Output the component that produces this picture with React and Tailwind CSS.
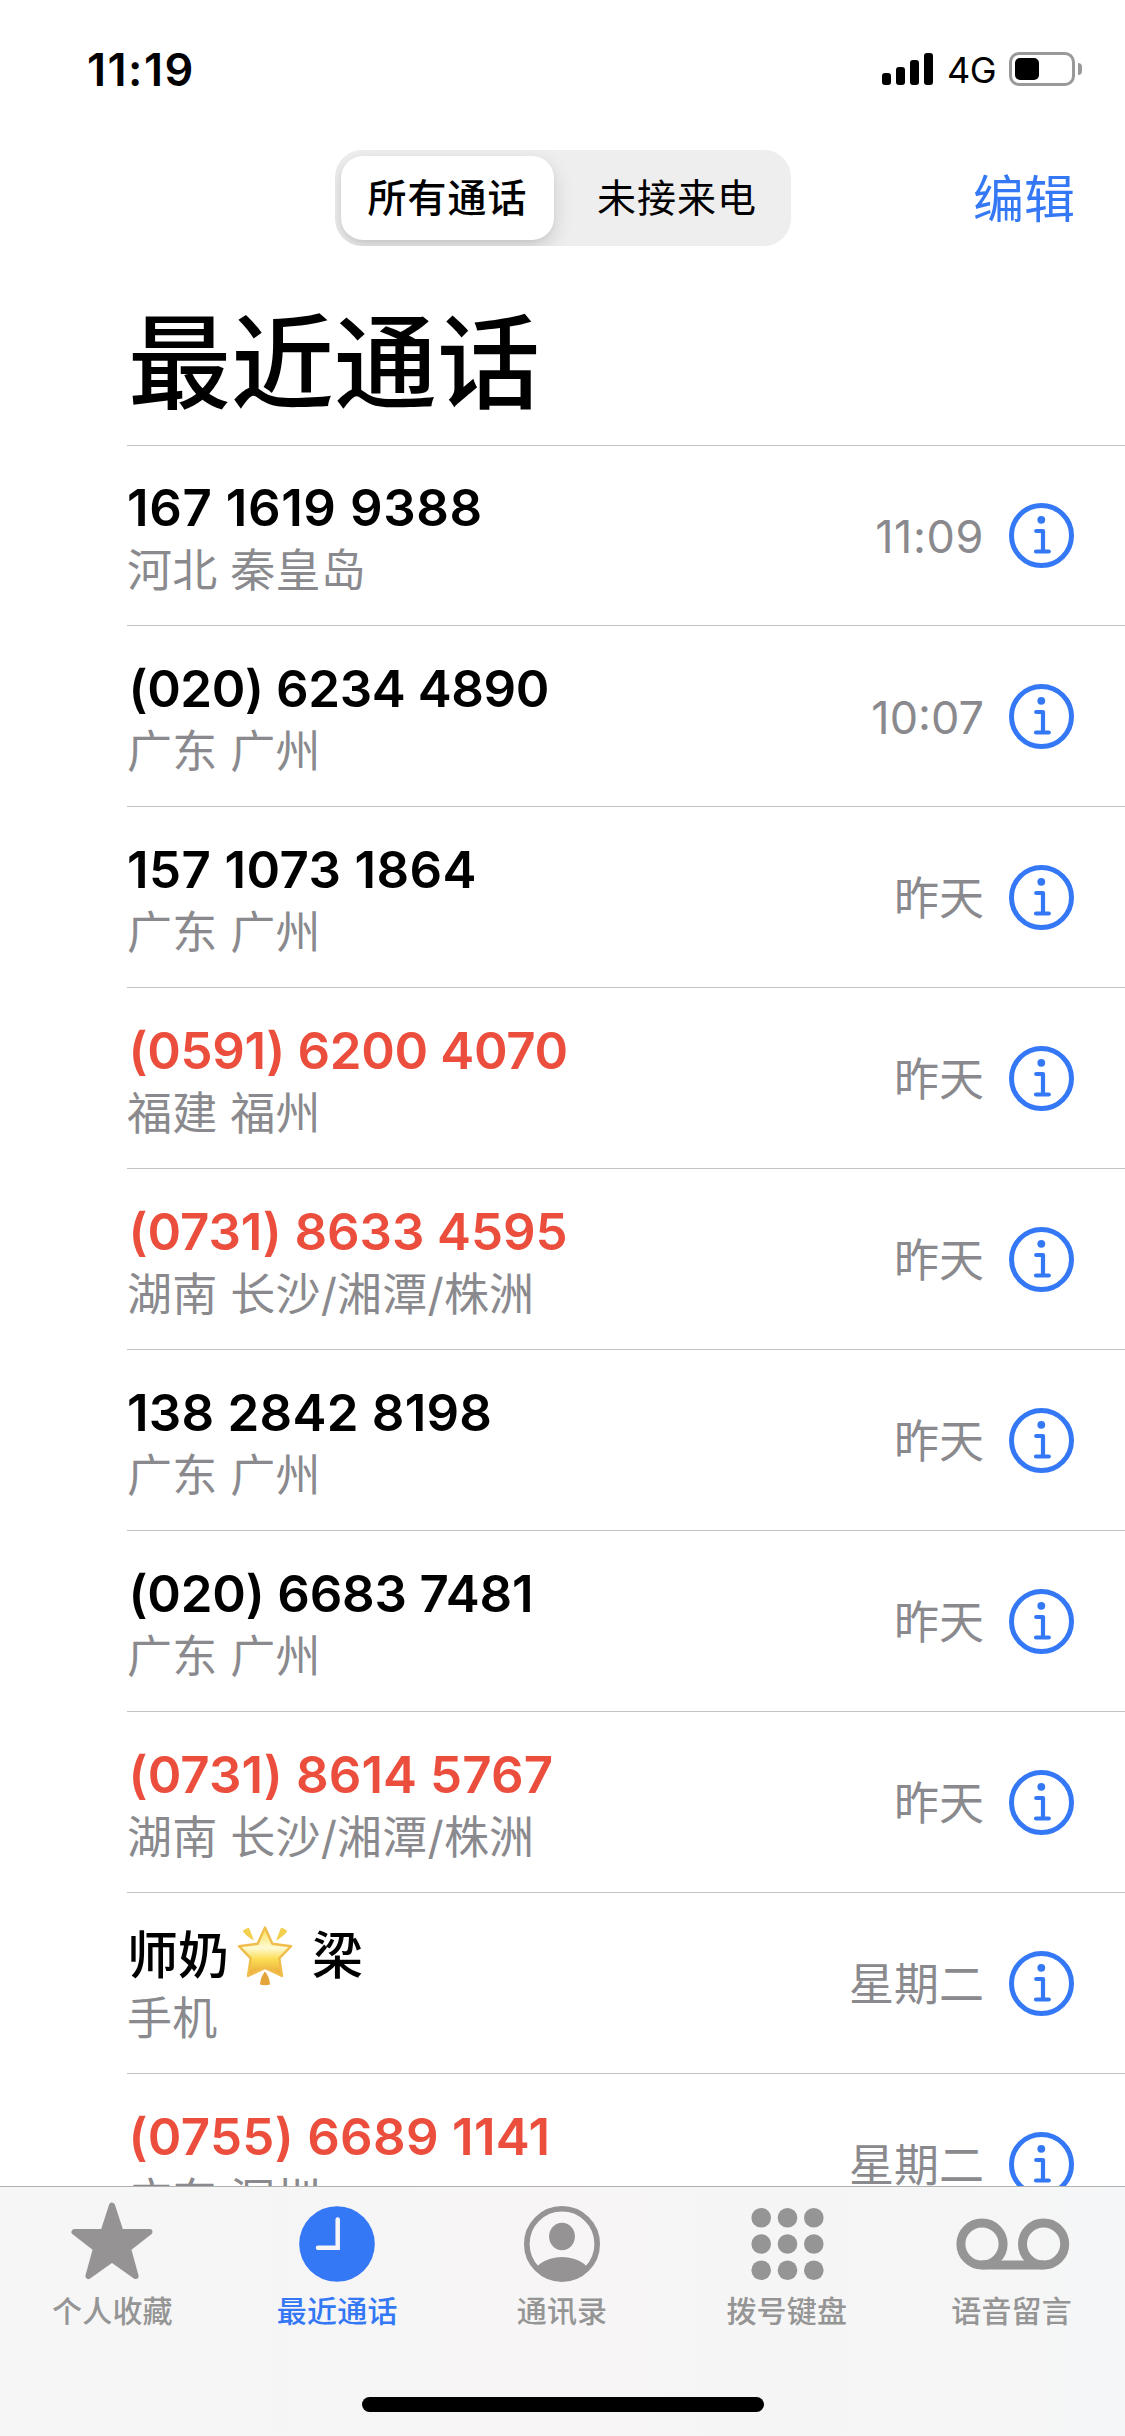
import { useState } from 'react';
import clsx from 'clsx';

const calls = [
  { id: 1, name: '167 1619 9388', place: '河北 秦皇岛', time: '11:09', tracking: 'tracking-[0.6px]' },
  { id: 2, name: '(020) 6234 4890', place: '广东 广州', time: '10:07', tracking: 'tracking-[-0.4px] pl-[1.5px]' },
  { id: 3, name: '157 1073 1864', place: '广东 广州', time: '昨天', tracking: 'tracking-[0.4px]' },
  { id: 4, name: '(0591) 6200 4070', place: '福建 福州', time: '昨天', missed: true, tracking: 'tracking-[-0.35px] pl-[1.5px]' },
  { id: 5, name: '(0731) 8633 4595', place: '湖南 长沙/湘潭/株洲', time: '昨天', missed: true, tracking: 'tracking-[-0.1px] pl-[1.5px]' },
  { id: 6, name: '138 2842 8198', place: '广东 广州', time: '昨天', tracking: 'tracking-[0.25px]' },
  { id: 7, name: '(020) 6683 7481', place: '广东 广州', time: '昨天', tracking: 'tracking-[-0.2px] pl-[1.5px]' },
  { id: 8, name: '(0731) 8614 5767', place: '湖南 长沙/湘潭/株洲', time: '昨天', missed: true, tracking: 'tracking-[0.1px] pl-[1.5px]' },
  { id: 9, name: '师奶', star: true, nameEnd: '梁', place: '手机', time: '星期二' },
  { id: 10, name: '(0755) 6689 1141', place: '广东 深圳', time: '星期二', missed: true, tracking: 'tracking-[0.3px] pl-[1.5px]' },
];

const InfoIcon = () => (
  <svg className="size-[65px]" viewBox="0 0 65 65" fill="none" stroke="#3478f6" strokeLinecap="round" strokeLinejoin="round">
    <circle cx="32.5" cy="32.5" r="30" strokeWidth="5" />
    <circle cx="32.3" cy="16.8" r="3.9" fill="#3478f6" stroke="none" />
    <path d="M27.2 28H34v20.5M27 48.5h12.8" strokeWidth="4.2" />
  </svg>
);

const GlowingStar = () => (
  <svg className="mr-[10px] ml-[8px] h-[60px] w-[56px] shrink-0" viewBox="0 0 56 60">
    <defs>
      <linearGradient id="glow" x1="0" y1="0" x2="0" y2="1">
        <stop offset="0" stopColor="#fbe04f" />
        <stop offset="0.42" stopColor="#fefad2" />
        <stop offset="0.65" stopColor="#fbde55" />
        <stop offset="1" stopColor="#e8a437" />
      </linearGradient>
    </defs>
    <path
      d="M28 1.5L35.3 17.8L54 20.2L42.3 32.4L45 50L28 42L11 50L13.7 32.4L2 20.2L20.7 17.8z"
      fill="url(#glow)"
      stroke="#f0bd4c"
      strokeWidth="2.4"
      strokeLinejoin="round"
    />
    <path d="M5.500 5Q9 2 12 1.800L17 14.500Q10 11 5.500 5z" fill="#f3cf4e" />
    <path d="M50.500 5Q47 2 44 1.800L39 14.500Q46 11 50.500 5z" fill="#f3cf4e" />
    <path d="M28 45.500Q32.500 51 33 58.500Q28 60 23 58.500Q23.500 51 28 45.500z" fill="#e4a43a" />
  </svg>
);

const StatusBar = () => (
  <div className="flex h-[132px] items-start justify-between pt-[52px] pr-[43px] pl-[87px]">
    <span className="text-[45px] leading-[35px] font-semibold tracking-[1.5px]">11:19</span>
    <div className="flex items-start">
      <div className="mt-px mr-[14px] flex h-[32px] items-end gap-[5px]">
        <span className="h-[12px] w-[9px] rounded-[3px] bg-black" />
        <span className="h-[18px] w-[9px] rounded-[3px] bg-black" />
        <span className="h-[25px] w-[9px] rounded-[3px] bg-black" />
        <span className="h-[32px] w-[9px] rounded-[3px] bg-black" />
      </div>
      <span className="mr-[13px] text-[36px] leading-[36px] tracking-[-0.5px]">4G</span>
      <div className="h-[34px] w-[66px] rounded-[10px] border-[3px] border-[#999] p-[3px]">
        <div className="h-[22px] w-[24px] rounded-[5px] bg-black" />
      </div>
      <span className="mt-[11px] ml-[3px] h-[12px] w-[4px] rounded-r-full bg-[#999]" />
    </div>
  </div>
);

const CallRow = ({ call, first }) => (
  <li className="flex">
    <div className={clsx('flex flex-1 border-b border-[#c3c3c5] pr-[51px]', first ? 'h-[180px]' : 'h-[181px]')}>
      <div className={clsx('flex-1', first ? 'pt-[31px]' : 'pt-[32px]')}>
        <div
          className={clsx(
            'flex h-[61px] items-center text-[51px] leading-[61px] whitespace-pre',
            call.missed ? 'text-[#eb4e3d]' : 'text-black',
            call.star ? 'font-medium' : 'font-semibold',
            call.tracking
          )}
        >
          {call.name}
          {call.star && <GlowingStar />}
          {call.nameEnd && <span className="ml-[9px]">{call.nameEnd}</span>}
        </div>
        <p className="mt-[6px] text-[45px] leading-[54px] tracking-[0.2px] text-[#8a8a8e]">{call.place}</p>
      </div>
      <div className="flex items-center gap-[25px]">
        <span className={clsx('pt-[3px] text-[45px] leading-[54px] text-[#8a8a8e]', first && 'tracking-[0.6px]')}>
          {call.time}
        </span>
        <InfoIcon />
      </div>
    </div>
  </li>
);

const StarIcon = () => (
  <svg className="h-[84px] w-[90px]" viewBox="0 0 90 84" fill="#959394" stroke="#959394" strokeWidth="6" strokeLinejoin="round">
    <path d="M45 6.500l8.600 26.500h28.900L61 49.600l7.600 27.400L45 60.400 21.400 77 29 49.600 7.500 33h28.900z" />
  </svg>
);

const ClockIcon = () => (
  <svg className="h-[84px] w-[90px]" viewBox="0 0 90 84" fill="none">
    <circle cx="45" cy="45" r="37.8" fill="#3478f6" />
    <path d="M45.700 20.500V48.800H26" stroke="#f7f5f6" strokeWidth="4.500" strokeLinecap="round" />
  </svg>
);

const ContactIcon = () => (
  <svg className="h-[84px] w-[90px]" viewBox="0 0 90 84" fill="none">
    <clipPath id="person">
      <circle cx="45" cy="45" r="37" />
    </clipPath>
    <circle cx="45" cy="45" r="35.200" stroke="#959394" strokeWidth="5.600" />
    <ellipse cx="45" cy="37.500" rx="12.900" ry="13.700" fill="#959394" />
    <ellipse cx="45" cy="80" rx="30.500" ry="22" fill="#959394" clipPath="url(#person)" />
  </svg>
);

const KeypadIcon = () => (
  <svg className="h-[84px] w-[90px]" viewBox="0 0 90 84" fill="#959595">
    {[18.7, 45, 71.3].map((y) =>
      [19.2, 45.5, 71.8].map((x) => <circle key={`${x}-${y}`} cx={x} cy={y} r="9.800" />)
    )}
  </svg>
);

const VoicemailIcon = () => (
  <svg className="h-[84px] w-[120px]" viewBox="0 0 120 84" fill="none" stroke="#959595" strokeWidth="9">
    <circle cx="30" cy="45" r="21.100" />
    <circle cx="91.600" cy="45" r="21.100" />
    <path d="M30 66.100h61.600" />
  </svg>
);

const tabs = [
  { label: '个人收藏', Icon: StarIcon },
  { label: '最近通话', Icon: ClockIcon, active: true },
  { label: '通讯录', Icon: ContactIcon },
  { label: '拨号键盘', Icon: KeypadIcon },
  { label: '语音留言', Icon: VoicemailIcon },
];

const TabBar = () => (
  <nav className="flex h-[250px] shrink-0 flex-col items-center border-t border-[#b1b1b2] bg-linear-to-r from-[#f6f6f7] via-[#f7f5f5] to-[#f5f6f7]">
    <div className="grid w-full grid-cols-5 pt-[12px] pr-px">
      {tabs.map(({ label, Icon, active }) => (
        <button key={label} className="flex flex-col items-center">
          <Icon />
          <span
            className={clsx(
              'mt-[10px] text-[30px] leading-[36px] font-medium tracking-[0.2px] whitespace-nowrap',
              active ? 'text-[#3478f6]' : 'text-[#959595]'
            )}
          >
            {label}
          </span>
        </button>
      ))}
    </div>
    <div className="mt-[68px] h-[15px] w-[402px] rounded-full bg-black" />
  </nav>
);

const App = () => {
  const [filter, setFilter] = useState('all');
  const selected = 'bg-white font-medium shadow-[0_8px_20px_rgba(0,0,0,0.14),0_2px_4px_rgba(0,0,0,0.05)]';
  const visible = filter === 'all' ? calls : calls.filter((c) => c.missed);

  return (
    <div className="flex h-[2436px] w-[1125px] flex-col overflow-hidden bg-white font-['Inter','Noto_Sans_CJK_SC',sans-serif] text-black">
      <StatusBar />
      <header className="grid grid-cols-[335px_456px_334px] items-center pt-[18px]">
        <div className="col-start-2 flex h-[96px] overflow-hidden rounded-[27px] bg-[#eeeeef] p-[6px]">
          <button
            onClick={() => setFilter('all')}
            className={clsx('w-[213px] rounded-[22px] text-[39px] tracking-[1px]', filter === 'all' && selected)}
          >
            所有通话
          </button>
          <button
            onClick={() => setFilter('missed')}
            className={clsx('ml-[15px] flex-1 rounded-[22px] text-[39px] tracking-[1px]', filter === 'missed' && selected)}
          >
            未接来电
          </button>
        </div>
        <button className="justify-self-end pt-[3px] pr-[50px] text-[51px] leading-[60px] text-[#3478f6]">编辑</button>
      </header>
      <h1 className="mt-[53px] ml-[127px] h-[147px] border-b border-[#c3c3c5] pt-[3px] pl-px text-[103px] leading-[123px] font-medium">
        最近通话
      </h1>
      <ul className="min-h-0 flex-1 overflow-hidden pl-[127px]">
        {visible.map((call, i) => (
          <CallRow key={call.id} call={call} first={i === 0} />
        ))}
      </ul>
      <TabBar />
    </div>
  );
};

export default App;
